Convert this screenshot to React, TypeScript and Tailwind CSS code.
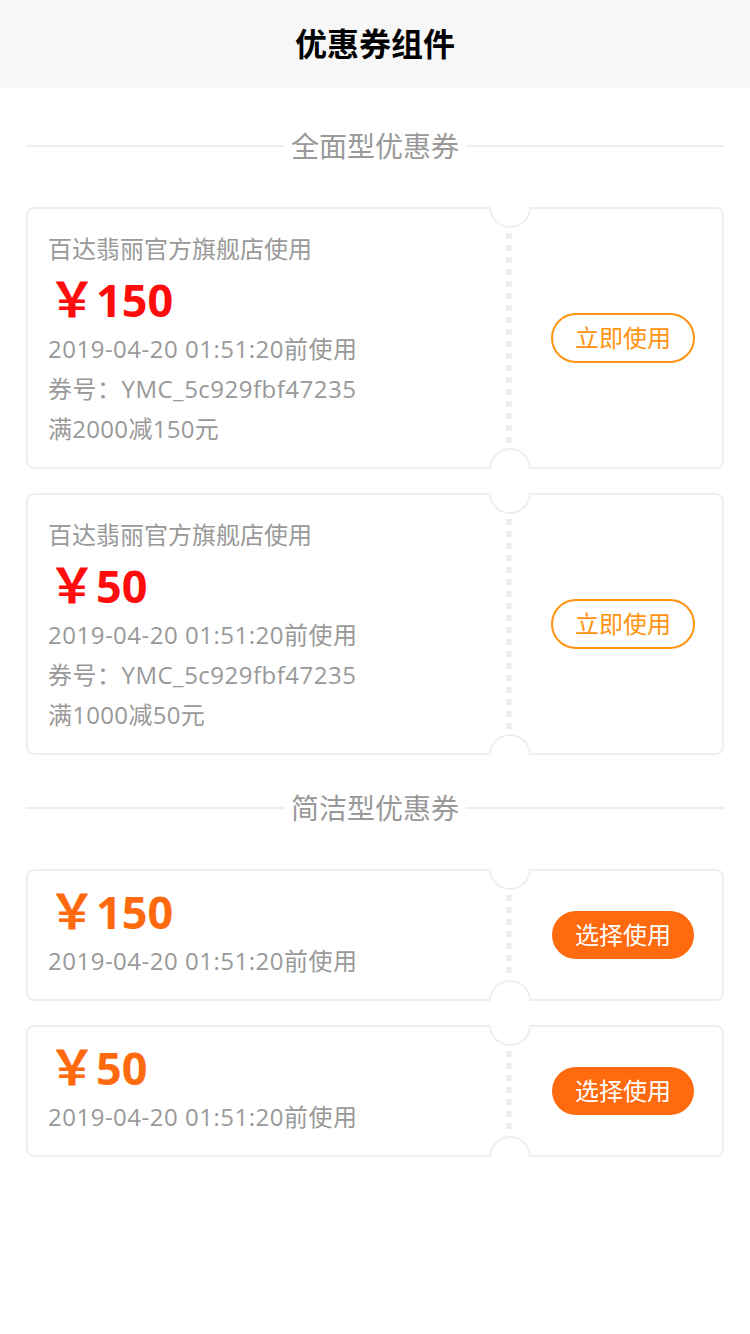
import React from 'react';

type Coupon = {
  shop?: string;
  amount: number;
  deadline: string;
  code?: string;
  rule?: string;
};

const fullCoupons: Coupon[] = [
  {
    shop: '百达翡丽官方旗舰店使用',
    amount: 150,
    deadline: '2019-04-20 01:51:20前使用',
    code: 'YMC_5c929fbf47235',
    rule: '满2000减150元',
  },
  {
    shop: '百达翡丽官方旗舰店使用',
    amount: 50,
    deadline: '2019-04-20 01:51:20前使用',
    code: 'YMC_5c929fbf47235',
    rule: '满1000减50元',
  },
];

const simpleCoupons: Coupon[] = [
  { amount: 150, deadline: '2019-04-20 01:51:20前使用' },
  { amount: 50, deadline: '2019-04-20 01:51:20前使用' },
];

const SectionTitle: React.FC<{ text: string; className?: string }> = ({ text, className }) => (
  <div className={`flex items-center gap-[7px] h-[40px] ${className || ''}`}>
    <div className="flex-1 h-[2px] bg-[#eeeeee]" />
    <span className="text-[28px] leading-[40px] text-[#999999]">{text}</span>
    <div className="flex-1 h-[2px] bg-[#eeeeee]" />
  </div>
);

// 票券外壳：虚线分隔 + 上下两个缺口
const Ticket: React.FC<{ left: React.ReactNode; right: React.ReactNode }> = ({ left, right }) => (
  <div className="relative overflow-hidden">
    <div className="flex bg-white border-2 border-[#eeeeee] rounded-[8px]">
      <div className="flex-1 pl-[20px]">{left}</div>
      <div className="w-[6px] my-[24px] bg-[linear-gradient(to_bottom,#eeeeee_50%,transparent_50%)] bg-[length:6px_12px]" />
      <div className="w-[210px] flex items-center pl-[39px]">{right}</div>
    </div>
    <div className="absolute top-[-21px] left-[463px] w-[42px] h-[42px] rounded-full bg-white border-2 border-[#eeeeee]" />
    <div className="absolute bottom-[-21px] left-[463px] w-[42px] h-[42px] rounded-full bg-white border-2 border-[#eeeeee]" />
  </div>
);

const Price: React.FC<{ amount: number; color: string }> = ({ amount, color }) => (
  <div className={`h-[60px] flex items-center font-bold ${color}`}>
    <span className="text-[48px] leading-none">￥</span>
    <span className="text-[45px] leading-none">{amount}</span>
  </div>
);

export default function App() {
  return (
    <div
      className="min-h-[1334px] bg-white"
      style={{ fontFamily: '"Open Sans", "Noto Sans CJK SC", sans-serif' }}
    >
      <div className="h-[88px] bg-[#f7f7f7] flex items-center justify-center">
        <h1 className="text-[32px] font-bold text-black">优惠券组件</h1>
      </div>

      <div className="px-[26px]">
        <SectionTitle text="全面型优惠券" className="mt-[38px] mb-[41px]" />
        <div className="flex flex-col gap-[24px]">
          {fullCoupons.map((c, i) => (
            <Ticket
              key={i}
              left={
                <div className="pt-[20px] pb-[18px] text-[24px] leading-[40px] text-[#999999]">
                  <div>{c.shop}</div>
                  <Price amount={c.amount} color="text-[#ff0d0d]" />
                  <div className="tracking-[0.5px]">{c.deadline}</div>
                  <div className="tracking-[0.5px]">券号：{c.code}</div>
                  <div className="tracking-[0.3px]">{c.rule}</div>
                </div>
              }
              right={
                <button className="w-[144px] h-[50px] rounded-full border-2 border-[#ff9310] text-[#ff9310] text-[24px] leading-none flex items-center justify-center">
                  立即使用
                </button>
              }
            />
          ))}
        </div>

        <SectionTitle text="简洁型优惠券" className="mt-[33px] mb-[41px]" />
        <div className="flex flex-col gap-[24px]">
          {simpleCoupons.map((c, i) => (
            <Ticket
              key={i}
              left={
                <div className="pt-[10px] pb-[18px] text-[24px] leading-[40px] text-[#999999]">
                  <Price amount={c.amount} color="text-[#ff6a0e]" />
                  <div className="tracking-[0.5px]">{c.deadline}</div>
                </div>
              }
              right={
                <button className="ml-[1px] w-[142px] h-[48px] rounded-full bg-[#ff6a0e] text-white text-[24px] leading-none flex items-center justify-center">
                  选择使用
                </button>
              }
            />
          ))}
        </div>
      </div>
    </div>
  );
}
